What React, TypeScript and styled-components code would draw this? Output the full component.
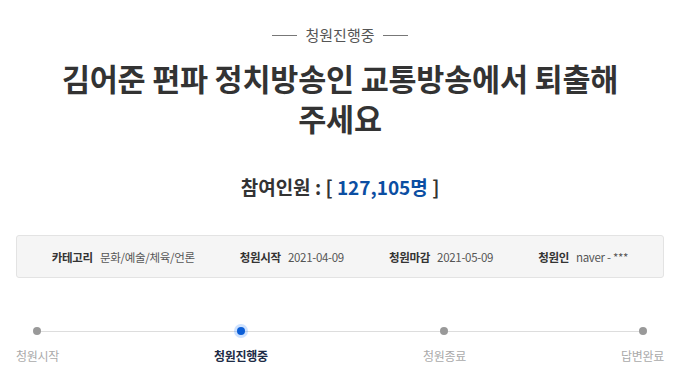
import React from "react";
import styled, { createGlobalStyle } from "styled-components";

const Global = createGlobalStyle`
  html, body { margin: 0; padding: 0; background: #fff; }
  body { font-family: "Noto Sans CJK KR", "Noto Sans", sans-serif; color: #333; }
`;

const Page = styled.div`
  width: 680px;
  box-sizing: border-box;
  padding: 25px 16px 0;
  display: flex;
  flex-direction: column;
  align-items: center;
`;

const Status = styled.div`
  display: flex;
  align-items: center;
  gap: 8px;
  font-size: 15px;
  line-height: 20px;
  color: #555;
  &::before, &::after {
    content: "";
    width: 25px;
    height: 1px;
    background: #777;
  }
`;

const Title = styled.h1`
  margin: 13px 0 0;
  font-size: 30.5px;
  line-height: 40px;
  font-weight: 700;
  color: #333;
  text-align: center;
  width: 600px;
  word-break: keep-all;
  letter-spacing: -0.2px;
`;

const Count = styled.div`
  margin-top: 36px;
  font-size: 19px;
  line-height: 26px;
  font-weight: 700;
  color: #333;
`;

const Num = styled.span`
  color: #0b4ea2;
`;

const InfoBox = styled.div`
  margin-top: 35px;
  width: 100%;
  box-sizing: border-box;
  height: 43px;
  background: #f5f5f5;
  border: 1px solid #e3e3e3;
  border-radius: 3px;
  display: flex;
  align-items: center;
  justify-content: center;
  gap: 45px;
  font-size: 11.5px;
  letter-spacing: -0.3px;
  color: #555;
`;

const InfoItem = styled.div`
  display: flex;
  gap: 7px;
  align-items: center;
`;

const Label = styled.span`
  font-weight: 700;
  color: #333;
`;

const Progress = styled.div`
  margin-top: 49px;
  width: 100%;
  position: relative;
  display: flex;
  justify-content: space-between;
  &::before {
    content: "";
    position: absolute;
    left: 21px;
    right: 21px;
    top: 4px;
    height: 1px;
    background: #ddd;
  }
`;

const Step = styled.div`
  display: flex;
  flex-direction: column;
  align-items: center;
  gap: 13px;
  position: relative;
`;

const Dot = styled.span<{ $active?: boolean }>`
  width: 8px;
  height: 8px;
  border-radius: 50%;
  background: ${(p) => (p.$active ? "#0b5ed7" : "#999")};
  box-shadow: ${(p) => (p.$active ? "0 0 0 3px rgba(60,140,255,0.25)" : "none")};
`;

const StepLabel = styled.span<{ $active?: boolean }>`
  font-size: 12px;
  line-height: 16px;
  letter-spacing: -0.3px;
  font-weight: ${(p) => (p.$active ? 700 : 400)};
  color: ${(p) => (p.$active ? "#1d2b45" : "#aaa")};
`;

const steps = [
  { label: "청원시작" },
  { label: "청원진행중", active: true },
  { label: "청원종료" },
  { label: "답변완료" },
];

export default function App() {
  return (
    <>
      <Global />
      <Page>
        <Status>청원진행중</Status>
        <Title>김어준 편파 정치방송인 교통방송에서 퇴출해 주세요</Title>
        <Count>
          참여인원 : [ <Num>127,105명</Num> ]
        </Count>
        <InfoBox>
          <InfoItem>
            <Label>카테고리</Label>
            <span>문화/예술/체육/언론</span>
          </InfoItem>
          <InfoItem>
            <Label>청원시작</Label>
            <span>2021-04-09</span>
          </InfoItem>
          <InfoItem>
            <Label>청원마감</Label>
            <span>2021-05-09</span>
          </InfoItem>
          <InfoItem>
            <Label>청원인</Label>
            <span>naver - ***</span>
          </InfoItem>
        </InfoBox>
        <Progress>
          {steps.map((s) => (
            <Step key={s.label}>
              <Dot $active={s.active} />
              <StepLabel $active={s.active}>{s.label}</StepLabel>
            </Step>
          ))}
        </Progress>
      </Page>
    </>
  );
}
